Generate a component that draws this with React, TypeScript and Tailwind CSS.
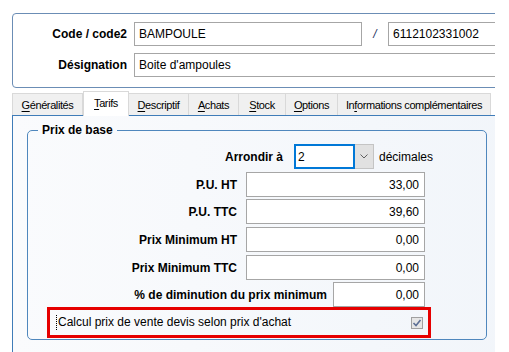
import React from "react";

const Tab = ({ w, pre, u, post, selected }: { w: number; pre: string; u: string; post: string; selected?: boolean }) => (
  <div
    style={{ width: w }}
    className={
      selected
        ? "relative z-10 -mb-px h-[25px] bg-white border border-b-0 border-[#d9d9d9] flex items-start justify-center pt-[3px] text-[11px] tracking-[-0.4px] text-black"
        : "h-[22px] bg-[#f0f0f0] border border-b-0 border-l-0 border-[#d9d9d9] flex items-start justify-center pt-[3px] text-[11px] tracking-[-0.4px] text-black first:border-l"
    }
  >
    <span>
      {pre}
      <u className="underline underline-offset-[2px]">{u}</u>
      {post}
    </span>
  </div>
);

const Field = ({ value, w }: { value: string; w: number }) => (
  <div
    style={{ width: w }}
    className="h-[25px] border border-[#a6a6a6] bg-white flex items-center justify-end pr-[5px] text-[12px] text-black"
  >
    {value}
  </div>
);

export default function App() {
  return (
    <div className="w-[509px] h-[352px] bg-white overflow-hidden font-['Liberation_Sans',Arial,sans-serif] text-black">
      <div className="pt-[13px] pl-[12px]">
        <div className="w-[483px] overflow-hidden">
          <div className="w-[540px]">
            {/* Top panel */}
            <div className="h-[75px] border border-[#6b8db5] rounded-[4px] pt-[8px] flex flex-col gap-[7px]">
              <div className="flex items-center h-[24px]">
                <div className="w-[114px] text-right font-bold text-[12px]">Code / code2</div>
                <div className="ml-[7px] w-[228px] h-[24px] border border-[#a6a6a6] bg-white pl-[4px] flex items-center text-[12px]">
                  BAMPOULE
                </div>
                <div className="w-[26px] text-center text-[12px] italic text-[#1e2f5c]">/</div>
                <div className="w-[160px] h-[24px] border border-[#a6a6a6] bg-white pl-[4px] flex items-center text-[12px]">
                  6112102331002
                </div>
              </div>
              <div className="flex items-center h-[24px]">
                <div className="w-[114px] text-right font-bold text-[12px]">Désignation</div>
                <div className="ml-[7px] w-[400px] h-[24px] border border-[#a6a6a6] bg-white pl-[4px] flex items-center text-[12px]">
                  Boite d'ampoules
                </div>
              </div>
            </div>

            {/* Tabs */}
            <div className="mt-[3px] h-[24px] flex items-end">
              <Tab w={71} pre="" u="G" post="énéralités" />
              <Tab w={46} pre="" u="T" post="arifs" selected />
              <Tab w={60} pre="" u="D" post="escriptif" />
              <Tab w={50} pre="" u="A" post="chats" />
              <Tab w={47} pre="" u="S" post="tock" />
              <Tab w={52} pre="" u="O" post="ptions" />
              <Tab w={153} pre="In" u="f" post="ormations complémentaires" />
            </div>

            {/* Tab panel */}
            <div className="h-[250px] border-l border-t border-[#3f7cb8] bg-gradient-to-r from-[#fafbfd] to-[#f1f5fa] pt-[7px]">
              <fieldset className="ml-[14px] w-[460px] border border-[#4f87bd] rounded-[5px] pt-[7px] pb-[1px]">
                <legend className="ml-[10px] px-[4px] font-bold text-[12px] leading-[14px]">Prix de base</legend>

                {/* Arrondir row */}
                <div className="flex items-center h-[25px]">
                  <div className="w-[255px] text-right font-bold text-[12px]">Arrondir à</div>
                  <div className="ml-[11px] w-[61px] h-[25px] border-2 border-[#0078d7] bg-white flex items-center pl-[2px] text-[12px]">
                    2
                  </div>
                  <div className="w-[19px] h-[25px] bg-[#e1e1e1] border border-l-0 border-[#c4c4c4] flex items-center justify-center">
                    <svg width="8" height="5" viewBox="0 0 8 5">
                      <path d="M0.5 0.5 L4 4 L7.5 0.5" fill="none" stroke="#606060" strokeWidth="1" />
                    </svg>
                  </div>
                  <div className="ml-[5px] text-[12px]">décimales</div>
                </div>

                <div className="flex items-center h-[25px] mt-[3px]">
                  <div className="w-[209px] text-right font-bold text-[12px]">P.U. HT</div>
                  <div className="ml-[9px]">
                    <Field value="33,00" w={179} />
                  </div>
                </div>
                <div className="flex items-center h-[25px] mt-[2px]">
                  <div className="w-[209px] text-right font-bold text-[12px]">P.U. TTC</div>
                  <div className="ml-[9px]">
                    <Field value="39,60" w={179} />
                  </div>
                </div>
                <div className="flex items-center h-[25px] mt-[3px]">
                  <div className="w-[209px] text-right font-bold text-[12px]">Prix Minimum HT</div>
                  <div className="ml-[9px]">
                    <Field value="0,00" w={179} />
                  </div>
                </div>
                <div className="flex items-center h-[25px] mt-[3px]">
                  <div className="w-[209px] text-right font-bold text-[12px]">Prix Minimum TTC</div>
                  <div className="ml-[9px]">
                    <Field value="0,00" w={179} />
                  </div>
                </div>
                <div className="flex items-center h-[25px] mt-[2px]">
                  <div className="w-[299px] text-right font-bold text-[12px]">% de diminution du prix minimum</div>
                  <div className="ml-[6px]">
                    <Field value="0,00" w={92} />
                  </div>
                </div>

                {/* Red box */}
                <div className="ml-[19px] w-[384px] h-[31px] border-[3px] border-[#e60000] flex items-center justify-between pl-[6px] pr-[5px]">
                  <span className="border-l border-dotted border-black pl-px text-[12px] leading-[15px]">
                    Calcul prix de vente devis selon prix d'achat
                  </span>
                  <svg width="12" height="12" viewBox="0 0 12 12">
                    <rect x="0.5" y="0.5" width="11" height="11" fill="#e6e6e6" stroke="#a0a0a0" />
                    <path d="M2.5 6 L5 8.5 L9.5 3" fill="none" stroke="#5c6f95" strokeWidth="1.6" />
                  </svg>
                </div>
              </fieldset>
            </div>
          </div>
        </div>
      </div>
    </div>
  );
}
